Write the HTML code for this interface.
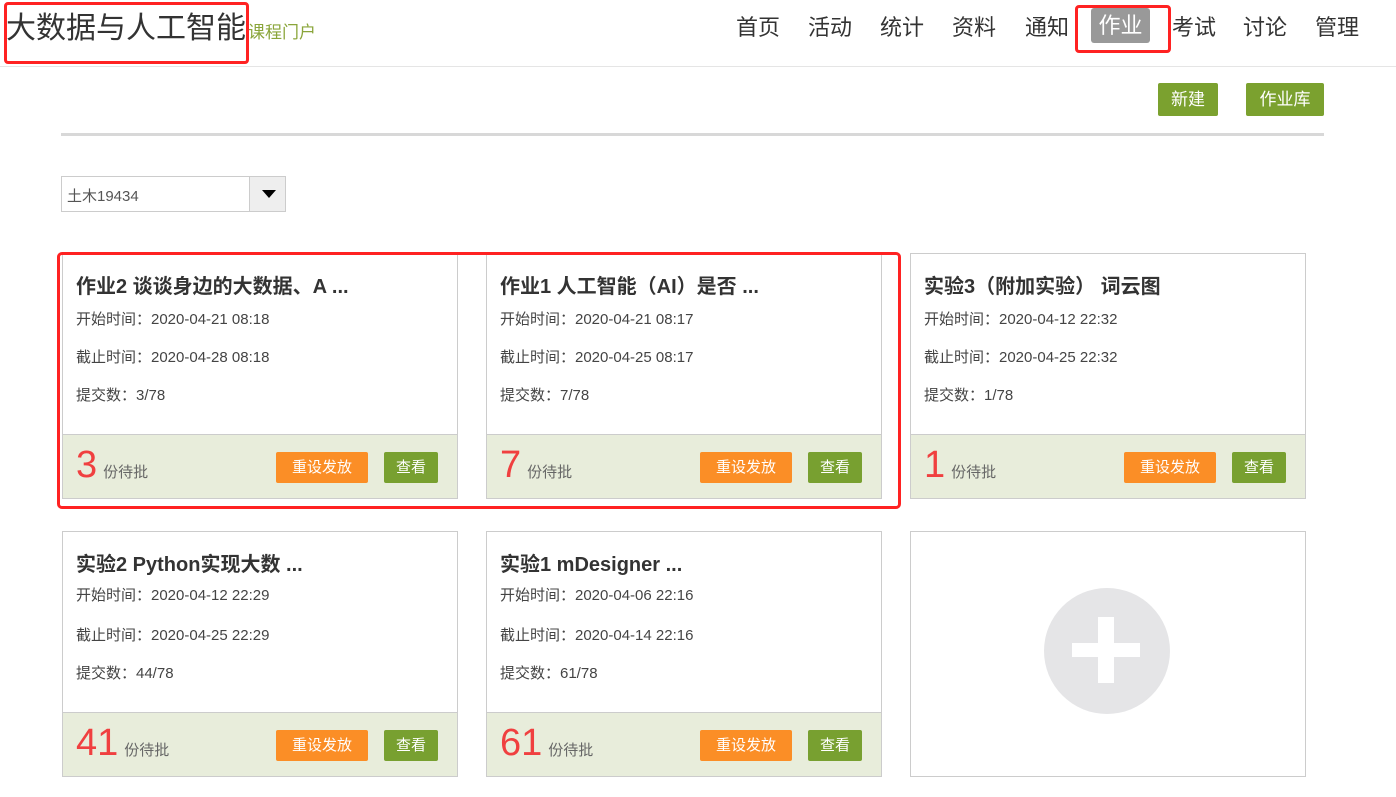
<!DOCTYPE html>
<html><head><meta charset="utf-8"><style>
*{margin:0;padding:0;box-sizing:border-box}
body{width:1396px;height:797px;background:#fff;font-family:"Liberation Sans","Noto Sans CJK SC",sans-serif;position:relative;overflow:hidden;color:#333}
.a{position:absolute}
.nav{position:absolute;top:14px;font-size:22px;color:#333;line-height:28px}
.card{position:absolute;width:396px;height:246px;border:1px solid #ccc;background:#fff}
.card h3{position:absolute;left:13px;top:16px;font-size:20px;font-weight:bold;color:#333;white-space:nowrap}
.card .l{position:absolute;left:13px;font-size:15px;color:#444}
.ft{position:absolute;left:0;right:0;bottom:0;height:64px;background:#e8eddb;border-top:1px solid #ccc}
.num{position:absolute;left:13px;top:8px;font-size:38px;color:#f04040;line-height:44px}
.num span{font-size:15px;color:#666;margin-left:6px}
.b1{position:absolute;left:213px;top:17px;width:92px;height:31px;background:#fb8e26;color:#fff;font-size:15px;text-align:center;line-height:31px;border-radius:2px}
.b2{position:absolute;left:321px;top:17px;width:54px;height:31px;background:#78a030;color:#fff;font-size:15px;text-align:center;line-height:31px;border-radius:2px}
.gb{position:absolute;background:#7ba12f;color:#fff;font-size:17px;text-align:center;line-height:33px;border-radius:2px;top:83px;height:33px}
</style></head><body>
<div class="a" style="left:6px;top:9px;font-size:30px;color:#333;line-height:40px">大数据与人工智能</div>
<div class="a" style="left:248px;top:18px;font-size:17px;color:#8aa53a">课程门户</div>
<div class="a" style="left:4px;top:2px;width:245px;height:62px;border:3px solid #f22;border-radius:4px"></div>
<div class="nav" style="left:736px">首页</div>
<div class="nav" style="left:808px">活动</div>
<div class="nav" style="left:880px">统计</div>
<div class="nav" style="left:952px">资料</div>
<div class="nav" style="left:1025px">通知</div>
<div class="a" style="left:1091px;top:8px;width:59px;height:35px;background:#999;border-radius:3px;color:#fff;font-size:22px;text-align:center;line-height:35px">作业</div>
<div class="a" style="left:1075px;top:5px;width:96px;height:48px;border:3px solid #f22;border-radius:4px"></div>
<div class="nav" style="left:1172px">考试</div>
<div class="nav" style="left:1243px">讨论</div>
<div class="nav" style="left:1315px">管理</div>
<div class="a" style="left:0;top:66px;width:1396px;height:1px;background:#e5e5e5"></div>
<div class="gb" style="left:1158px;width:60px">新建</div>
<div class="gb" style="left:1246px;width:78px">作业库</div>
<div class="a" style="left:61px;top:133px;width:1263px;height:3px;background:#d8d8d8"></div>
<div class="a" style="left:61px;top:176px;width:225px;height:36px;border:1px solid #ccc"></div>
<div class="a" style="left:67px;top:185px;font-size:15px;color:#555">土木19434</div>
<div class="a" style="left:249px;top:176px;width:37px;height:36px;border:1px solid #ccc;background:#eee"></div>
<div class="a" style="left:262px;top:190px;width:0;height:0;border-left:7px solid transparent;border-right:7px solid transparent;border-top:8px solid #000"></div>

<div class="card" style="left:62px;top:253px"><h3>作业2 谈谈身边的大数据、A ...</h3><div class="l" style="top:54px">开始时间：2020-04-21 08:18</div><div class="l" style="top:92px">截止时间：2020-04-28 08:18</div><div class="l" style="top:130px">提交数：3/78</div><div class="ft"><div class="num">3<span>份待批</span></div><div class="b1">重设发放</div><div class="b2">查看</div></div></div>
<div class="card" style="left:486px;top:253px"><h3>作业1 人工智能（AI）是否 ...</h3><div class="l" style="top:54px">开始时间：2020-04-21 08:17</div><div class="l" style="top:92px">截止时间：2020-04-25 08:17</div><div class="l" style="top:130px">提交数：7/78</div><div class="ft"><div class="num">7<span>份待批</span></div><div class="b1">重设发放</div><div class="b2">查看</div></div></div>
<div class="card" style="left:910px;top:253px"><h3>实验3（附加实验） 词云图</h3><div class="l" style="top:54px">开始时间：2020-04-12 22:32</div><div class="l" style="top:92px">截止时间：2020-04-25 22:32</div><div class="l" style="top:130px">提交数：1/78</div><div class="ft"><div class="num">1<span>份待批</span></div><div class="b1">重设发放</div><div class="b2">查看</div></div></div>
<div class="card" style="left:62px;top:531px"><h3>实验2 Python实现大数 ...</h3><div class="l" style="top:52px">开始时间：2020-04-12 22:29</div><div class="l" style="top:92px">截止时间：2020-04-25 22:29</div><div class="l" style="top:130px">提交数：44/78</div><div class="ft"><div class="num">41<span>份待批</span></div><div class="b1">重设发放</div><div class="b2">查看</div></div></div>
<div class="card" style="left:486px;top:531px"><h3>实验1 mDesigner ...</h3><div class="l" style="top:52px">开始时间：2020-04-06 22:16</div><div class="l" style="top:92px">截止时间：2020-04-14 22:16</div><div class="l" style="top:130px">提交数：61/78</div><div class="ft"><div class="num">61<span>份待批</span></div><div class="b1">重设发放</div><div class="b2">查看</div></div></div>
<div class="card" style="left:910px;top:531px"></div>
<div class="a" style="left:1044px;top:588px;width:126px;height:126px;border-radius:50%;background:#e5e5e7"></div>
<div class="a" style="left:1072px;top:643px;width:68px;height:14px;background:#fff"></div>
<div class="a" style="left:1098px;top:617px;width:16px;height:66px;background:#fff"></div>
<div class="a" style="left:57px;top:252px;width:844px;height:257px;border:3px solid #f22;border-radius:5px"></div>
</body></html>
